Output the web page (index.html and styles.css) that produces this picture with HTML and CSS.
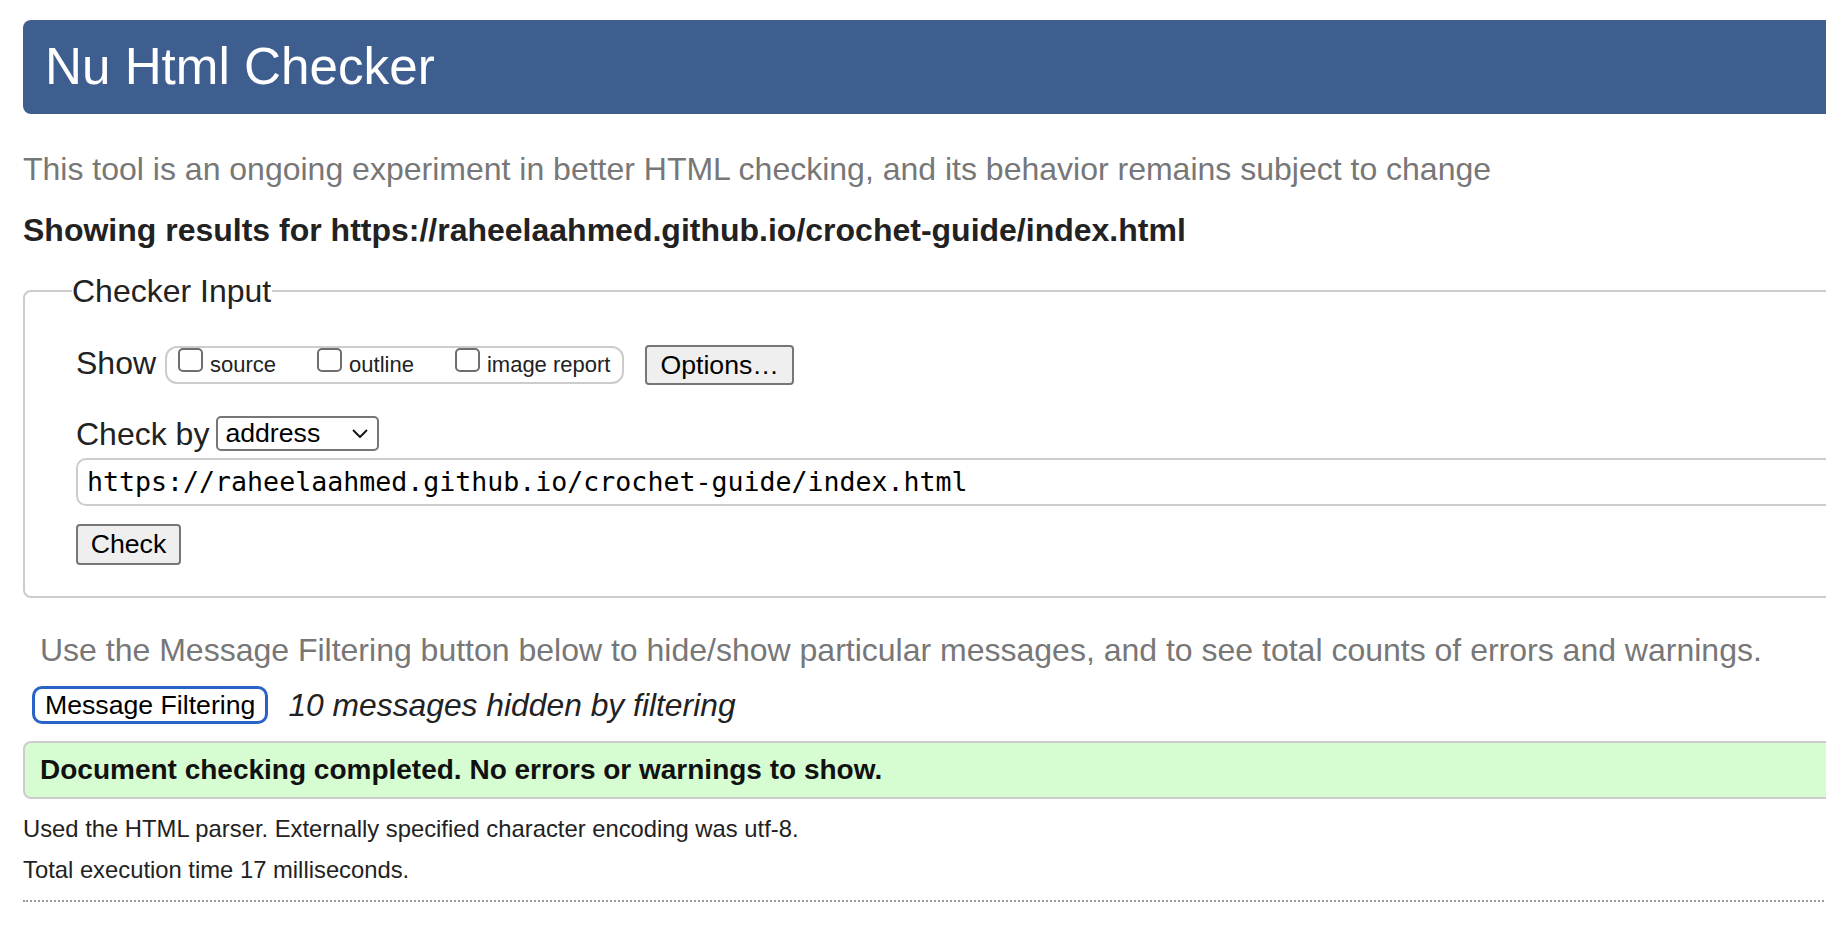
FILE: index.html
```html
<!DOCTYPE html>
<html lang="en">
<head>
<meta charset="utf-8">
<title>Nu Html Checker</title>
<link rel="stylesheet" href="styles.css">
</head>
<body>
<div class="page">
  <h1 class="title">Nu Html Checker</h1>
  <p class="intro">This tool is an ongoing experiment in better HTML checking, and its behavior remains subject to change</p>
  <h2 class="results">Showing results for https://raheelaahmed.github.io/crochet-guide/index.html</h2>

  <fieldset class="checker">
    <legend class="legend">Checker Input</legend>
    <div class="row-show">
      <span class="lbl">Show</span>
      <div class="showgroup">
        <span class="opt"><span class="cb"></span>source</span><span class="opt opt-gap"><span class="cb"></span>outline</span><span class="opt opt-gap"><span class="cb"></span>image report</span>
      </div>
      <button class="btn btn-options" type="button">Options…</button>
    </div>
    <div class="row-by">
      <span class="lbl lbl-by">Check by</span>
      <div class="select">
        <span class="select-text">address</span>
        <svg class="chev" width="16" height="10" viewBox="0 0 16 10"><path d="M1.5 1.5 L8 8 L14.5 1.5" fill="none" stroke="#111" stroke-width="1.8" stroke-linecap="round" stroke-linejoin="round"/></svg>
      </div>
    </div>
    <div class="url">https://raheelaahmed.github.io/crochet-guide/index.html</div>
    <button class="btn btn-check" type="button">Check</button>
  </fieldset>

  <p class="filter-note">Use the Message Filtering button below to hide/show particular messages, and to see total counts of errors and warnings.</p>
  <div class="filter-row">
    <button class="mf-btn" type="button">Message Filtering</button>
    <span class="hidden-note">10 messages hidden by filtering</span>
  </div>

  <div class="success">Document checking completed. No errors or warnings to show.</div>

  <p class="info">Used the HTML parser. Externally specified character encoding was utf-8.</p>
  <p class="info info-2">Total execution time 17 milliseconds.</p>
  <div class="footer-rule"></div>
</div>
</body>
</html>
```

FILE: styles.css
```css
html, body {
  margin: 0;
  padding: 0;
  background: #fff;
  overflow: hidden;
}

body {
  font-family: "Liberation Sans", Arial, Helvetica, sans-serif;
  color: #222;
}

.page {
  width: 2000px;
  padding: 20px 0 0 23px;
}

.title {
  margin: 0;
  height: 94px;
  box-sizing: border-box;
  padding-left: 22px;
  line-height: 94px;
  font-size: 51.2px;
  font-weight: normal;
  color: #fff;
  background: #3f5e90;
  border-radius: 8px;
}

.intro {
  margin: 35px 0 0;
  font-size: 32px;
  line-height: 40px;
  color: #777;
}

.results {
  margin: 21px 0 0;
  font-size: 32px;
  line-height: 40px;
  font-weight: bold;
  color: #222;
}

.checker {
  margin: 21px 0 0;
  padding: 34px 0 31px 51px;
  border: 2px solid #ccc;
  border-radius: 8px;
  min-width: 0;
}

.legend {
  margin-left: -4px;
  padding: 0 1px 0 0;
  font-size: 32px;
  line-height: 40px;
  color: #222;
}

.row-show {
  display: flex;
  align-items: center;
  height: 40px;
}

.lbl {
  font-size: 32px;
  line-height: 34px;
  margin-bottom: 4px;
  margin-right: 9px;
  color: #222;
}

.lbl-by {
  margin-right: 7px;
  margin-bottom: 0;
}

.showgroup {
  height: 38px;
  box-sizing: border-box;
  border: 2px solid #ccc;
  border-radius: 12px;
  padding: 0 12px 0 11px;
  line-height: 34px;
  font-size: 22px;
  white-space: nowrap;
  color: #222;
}

.opt-gap {
  margin-left: 41px;
}

.cb {
  display: inline-block;
  width: 25px;
  height: 24px;
  box-sizing: border-box;
  border: 2px solid #6e6e6e;
  border-radius: 5px;
  margin-right: 7px;
  vertical-align: baseline;
  background: #fff;
}

.btn {
  font-family: "Liberation Sans", Arial, Helvetica, sans-serif;
  font-size: 26.67px;
  color: #000;
  background: #efefef;
  border: 2px solid #767676;
  border-radius: 4px;
  box-sizing: border-box;
  margin: 0;
  padding: 0 12.7px;
  line-height: normal;
}

.btn-options {
  margin-left: 21px;
  height: 40px;
  padding: 0 13px;
}

.row-by {
  display: flex;
  align-items: center;
  height: 35px;
  margin-top: 31px;
}

.select {
  display: flex;
  align-items: center;
  justify-content: space-between;
  width: 163px;
  height: 35px;
  box-sizing: border-box;
  border: 2px solid #767676;
  border-radius: 5px;
  padding: 0 9px 0 7px;
  font-size: 26.67px;
  color: #000;
  background: #fff;
}

.chev {
  display: block;
  margin-top: 1px;
}

.url {
  margin-top: 7px;
  height: 48px;
  box-sizing: border-box;
  border: 2px solid #ccc;
  border-radius: 10px;
  padding-left: 9px;
  line-height: 44px;
  font-family: "DejaVu Sans Mono", "Liberation Mono", monospace;
  font-size: 26.6px;
  color: #000;
  white-space: nowrap;
}

.btn-check {
  display: block;
  margin-top: 18px;
  height: 41px;
}

.filter-note {
  margin: 32px 0 0;
  padding-left: 17px;
  font-size: 32px;
  line-height: 40px;
  color: #777;
}

.filter-row {
  display: flex;
  align-items: center;
  height: 38px;
  margin-top: 16px;
  padding-left: 9px;
}

.mf-btn {
  height: 38px;
  box-sizing: border-box;
  margin: 0;
  padding: 0 10px;
  border: 3px solid #2a63c7;
  border-radius: 10px;
  background: #fff;
  font-family: "Liberation Sans", Arial, Helvetica, sans-serif;
  font-size: 26.67px;
  color: #000;
}

.hidden-note {
  margin-left: 20px;
  font-size: 31.8px;
  font-style: italic;
  line-height: 38px;
  color: #222;
}

.success {
  margin-top: 17px;
  height: 58px;
  box-sizing: border-box;
  border: 2px solid #ccc;
  border-radius: 8px;
  background: #d6fcd1;
  padding-left: 15px;
  font-size: 28px;
  font-weight: bold;
  line-height: 54px;
  color: #111;
}

.info {
  margin: 15px 0 0;
  font-size: 23.8px;
  line-height: 30px;
  color: #222;
}

.info-2 {
  margin-top: 11px;
}

.footer-rule {
  margin-top: 15px;
  border-top: 2px dotted #999;
}
```
